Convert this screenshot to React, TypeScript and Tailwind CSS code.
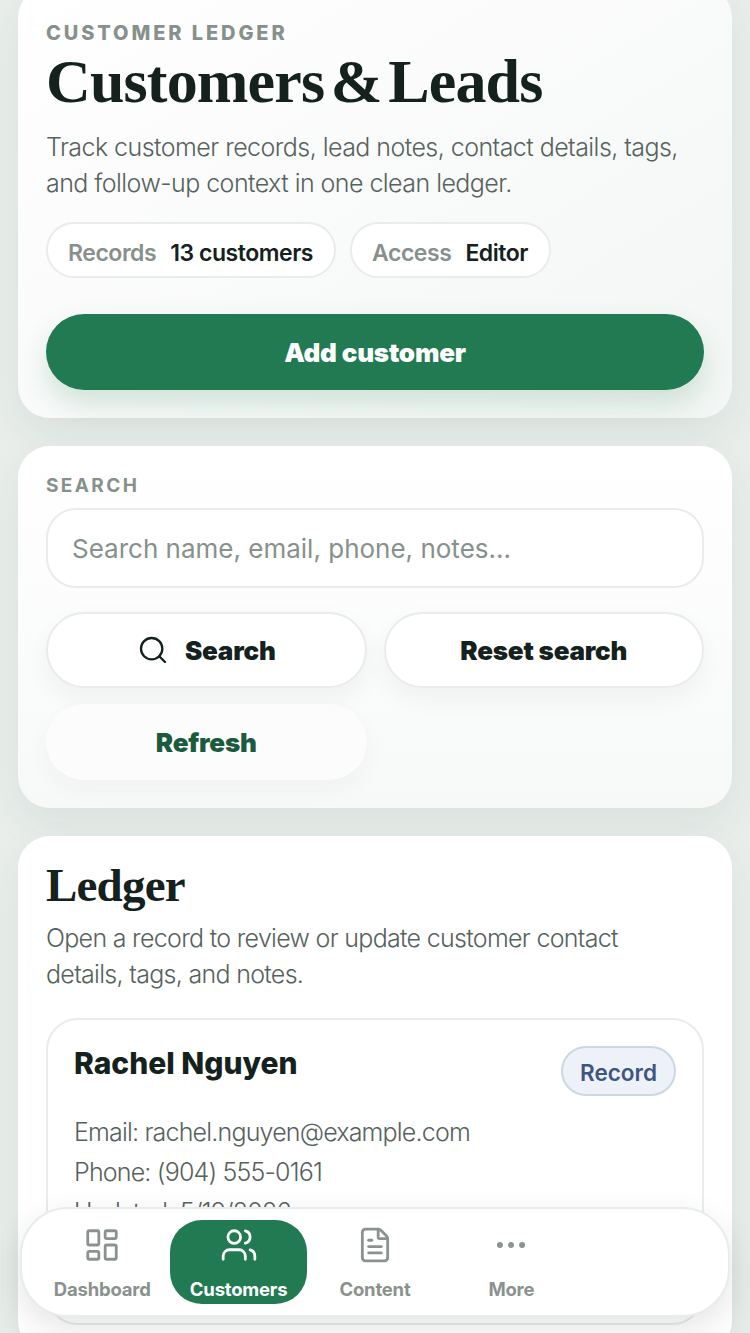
import { Ellipsis, FileText, LayoutDashboard, Search, Users } from "lucide-react";

const sans = "font-['Inter','Liberation_Sans',sans-serif]";

const navItems = [
	{ label: "Dashboard", icon: LayoutDashboard },
	{ label: "Customers", icon: Users, active: true },
	{ label: "Content", icon: FileText },
	{ label: "More", icon: Ellipsis },
];

export default function App() {
	return (
		<div className={`relative h-[1333px] w-[750px] overflow-hidden bg-[#e9eeeb] ${sans}`}>
			<div className="-mt-[14px] flex flex-col gap-[28px] px-[18px]">
				<section className="rounded-[32px] bg-gradient-to-br from-white to-[#f3f6f4] px-[28px] pt-[35px] pb-[28px] shadow-[0_16px_40px_rgba(30,60,45,0.07)]">
					<p className="text-[20px] leading-[24px] font-extrabold tracking-[2.9px] text-[#87918c]">CUSTOMER LEDGER</p>
					<h1 className="mt-[3px] font-['Liberation_Serif',serif] text-[62px] leading-[66px] font-bold tracking-[-0.85px] [word-spacing:-8px] text-[#14211c]">
						Customers &amp; Leads
					</h1>
					<p className="mt-[15px] text-[25px] leading-[36px] font-[350] tracking-[-0.55px] text-[#56625d]">
						Track customer records, lead notes, contact details, tags, and follow-up context in one clean ledger.
					</p>
					<div className="mt-[21px] flex gap-[14px]">
						<div className="flex h-[56px] items-center gap-[14px] rounded-full border-2 border-[#e8ecea] bg-white pt-[6px] pr-[21px] pl-[20px] text-[23px] font-semibold tracking-[-0.45px]">
							<span className="text-[#87918c]">Records</span>
							<span className="text-[#14211c]">13 customers</span>
						</div>
						<div className="flex h-[56px] items-center gap-[14px] rounded-full border-2 border-[#e8ecea] bg-white pt-[6px] pr-[21px] pl-[20px] text-[23px] font-semibold tracking-[-0.45px]">
							<span className="text-[#87918c]">Access</span>
							<span className="text-[#14211c]">Editor</span>
						</div>
					</div>
					<button className="mt-[36px] flex h-[76px] w-full items-center justify-center rounded-full bg-[#217a52] text-[26px] font-black tracking-[-0.2px] text-white shadow-[0_14px_28px_rgba(33,122,82,0.18)]">
						Add customer
					</button>
				</section>

				<section className="rounded-[32px] bg-gradient-to-b from-white to-[#f7f9f8] px-[28px] pt-[29px] pb-[28px] shadow-[0_16px_40px_rgba(30,60,45,0.07)]">
					<label className="block text-[19px] leading-[22px] font-bold tracking-[2.4px] text-[#87918c]">SEARCH</label>
					<input
						placeholder="Search name, email, phone, notes..."
						className="mt-[11px] h-[80px] w-full rounded-[30px] border-2 border-[#e8ecea] bg-white px-[24px] text-[26px] tracking-[0px] text-[#14211c] outline-none placeholder:text-[#87918c]"
					/>
					<div className="mt-[24px] grid grid-cols-2 gap-x-[17px] gap-y-[16px]">
						<button className="flex h-[76px] items-center justify-center gap-[16px] rounded-full border-2 border-[#e8ecea] bg-white text-[26px] font-black tracking-[-0.2px] text-[#14211c] shadow-[0_10px_24px_rgba(30,60,45,0.05)]">
							<Search size={32} strokeWidth={1.75} />
							Search
						</button>
						<button className="flex h-[76px] items-center justify-center rounded-full border-2 border-[#e8ecea] bg-white text-[26px] font-black tracking-[-0.2px] text-[#14211c] shadow-[0_10px_24px_rgba(30,60,45,0.05)]">
							Reset search
						</button>
						<button className="flex h-[76px] items-center justify-center rounded-full bg-[#fbfcfb] text-[26px] font-black tracking-[-0.2px] text-[#1c5a3e] shadow-[0_10px_24px_rgba(30,60,45,0.035)]">
							Refresh
						</button>
					</div>
				</section>

				<section className="rounded-[32px] bg-white px-[28px] pt-[20px] pb-[28px] shadow-[0_16px_40px_rgba(30,60,45,0.07)]">
					<h2 className="font-['Liberation_Serif',serif] text-[47px] leading-[58px] font-bold tracking-[-0.8px] text-[#14211c]">Ledger</h2>
					<p className="mt-[6px] max-w-[600px] text-[25px] leading-[36px] font-[350] tracking-[-0.7px] text-[#56625d]">
						Open a record to review or update customer contact details, tags, and notes.
					</p>
					<div className="mt-[26px] h-[307px] rounded-[32px] border-2 border-[#e8ecea] bg-white px-[26px] pt-[26px]">
						<div className="flex items-start justify-between">
							<h3 className="-mt-[1px] text-[30px] leading-[36px] font-extrabold tracking-[0px] text-[#14211c]">Rachel Nguyen</h3>
							<span className="flex h-[50px] items-center rounded-full border-2 border-[#ccd7e6] bg-[#eef2f8] px-[17px] pt-[3px] text-[22.5px] font-semibold text-[#3e5680]">
								Record
							</span>
						</div>
						<div className="mt-[16px] text-[25px] leading-[40px] font-[350] tracking-[-0.82px] text-[#56625d]">
							<p>Email: rachel.nguyen@example.com</p>
							<p>Phone: (904) 555-0161</p>
							<p>Updated: 5/19/2026</p>
						</div>
					</div>
				</section>
			</div>

			<nav className="absolute top-[1207px] left-[20px] flex h-[110px] w-[710px] items-center rounded-[48px] border-2 border-[#e8ecea] bg-white px-[12px] shadow-[0_12px_32px_rgba(30,40,35,0.12)]">
				{navItems.map(({ label, icon: Icon, active }) => (
					<div
						key={label}
						className={`flex h-[84px] w-[136.4px] flex-col items-center rounded-[32px] pt-[6px] text-[18.5px] leading-[22px] font-bold tracking-[-0.2px] ${active ? "bg-[#217a52] text-white" : "text-[#8b928e]"}`}
					>
						<Icon size={38} strokeWidth={1.75} />
						<span className="mt-[14px]">{label}</span>
					</div>
				))}
			</nav>
		</div>
	);
}
